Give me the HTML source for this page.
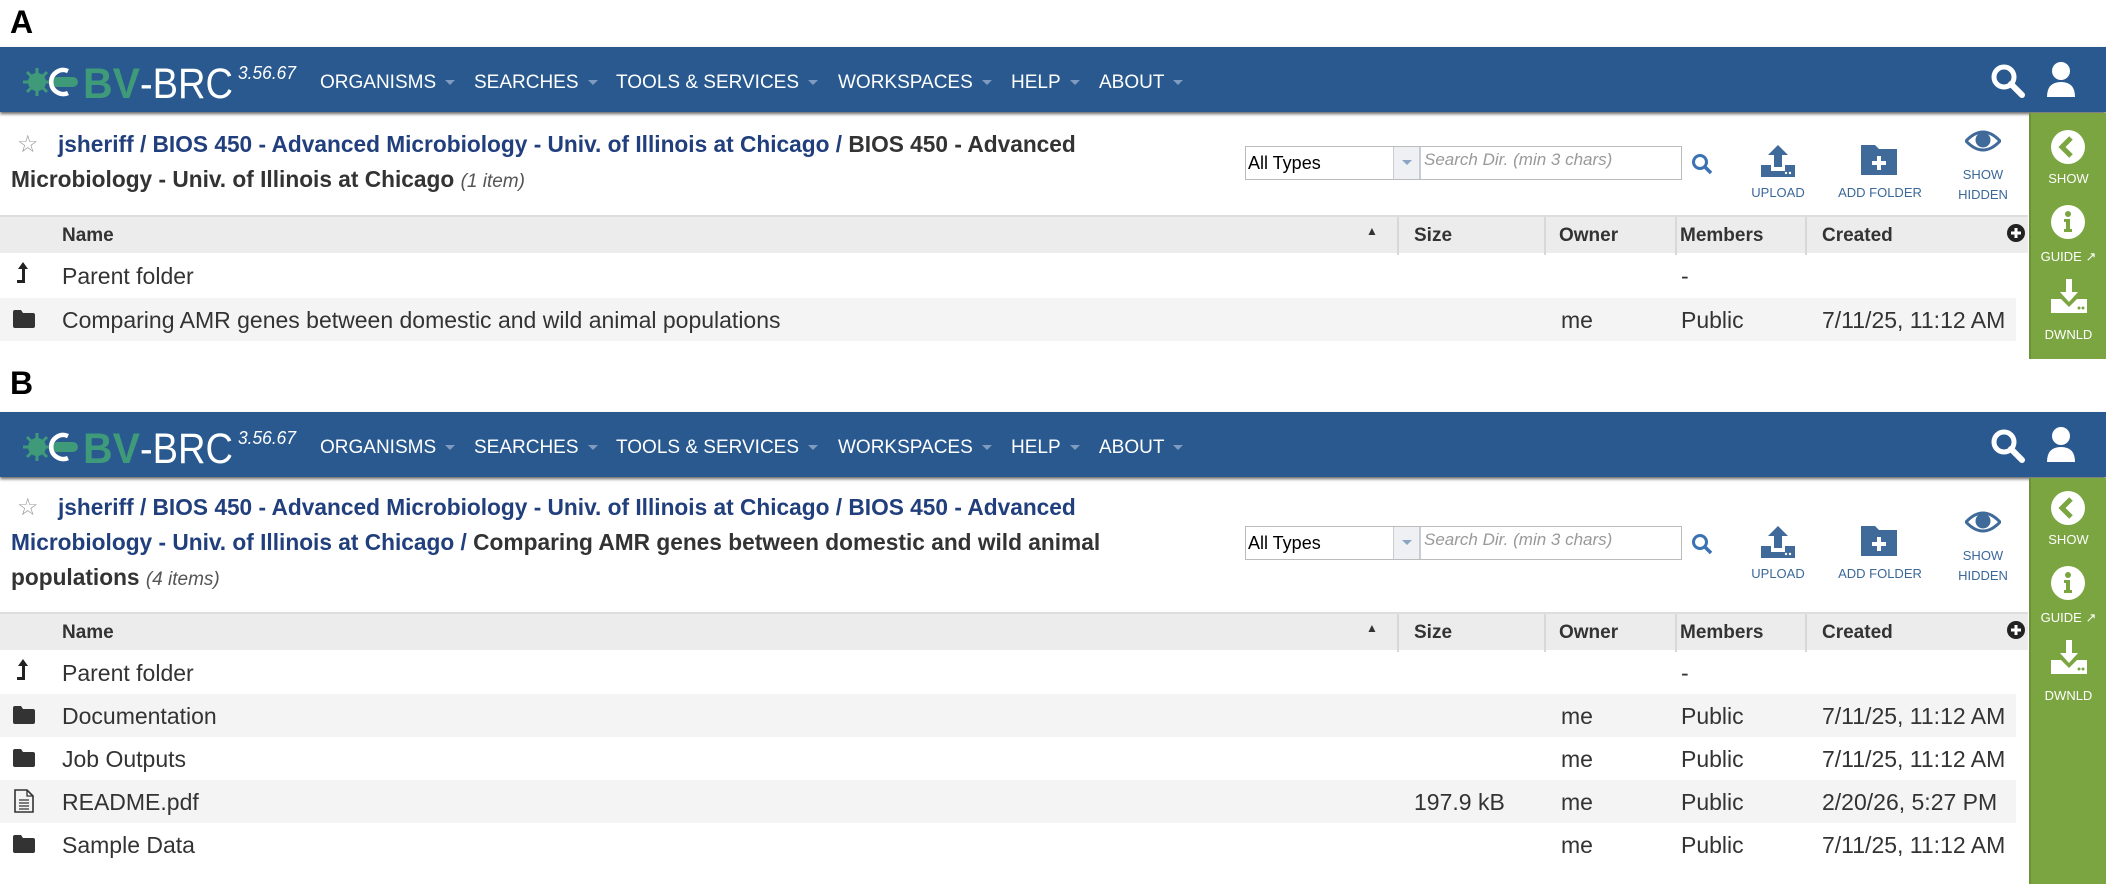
<!DOCTYPE html>
<html><head><meta charset="utf-8"><style>
*{box-sizing:border-box;margin:0;padding:0}
body{width:2106px;height:884px;background:#fff;font-family:"Liberation Sans",Arial,sans-serif;position:relative;overflow:hidden;color:#333}
.lbl{position:absolute;left:10px;font-weight:bold;font-size:32px;color:#000}
.panel{position:absolute;left:0;width:2106px}
.nav{position:absolute;left:0;top:0;width:2106px;height:65px;background:#29598f;box-shadow:0 2px 3px rgba(0,0,0,.6)}
.navi{position:absolute;top:3px;height:65px;line-height:65px;color:#fff;font-size:19px;white-space:nowrap}
.car{display:inline-block;width:0;height:0;border-left:5px solid transparent;border-right:5px solid transparent;border-top:5px solid #7f9cc0;margin-left:9px;vertical-align:middle}
.side{position:absolute;left:2029px;width:77px;background:#7ba540;border-left:2px solid #6a9236}
.side .t{position:absolute;left:0;width:75px;text-align:center;color:#fff;font-size:13px}
.bc{position:absolute;left:11px;font-size:22.7px;font-weight:bold;line-height:35px;color:#333;white-space:nowrap}
.bc a{color:#213f7d;text-decoration:none}
.bc i{font-weight:normal;font-size:19px;color:#555}
.hdr{position:absolute;left:0;width:2028px;height:38px;background:#ececec;border-top:2px solid #ddd;font-weight:bold;font-size:19px;color:#333}
.hdr span{position:absolute;top:8px}
.sep{position:absolute;top:0;width:2px;height:38px;background:#d8d8d8}
.row{position:absolute;left:0;width:2016px;height:43px;font-size:23px;color:#333;white-space:nowrap}
.row span{position:absolute;top:9px}
.g{background:#f4f4f4}
.tb{position:absolute;font-size:13px;color:#3b6899;text-align:center}
</style></head><body>

<div class="lbl" style="top:4px">A</div>
<div class="lbl" style="top:365px">B</div>

<div class="panel" style="top:47px;height:312px">
 <div class="nav">
  <svg style="position:absolute;left:22px;top:15px" width="300" height="40" viewBox="0 0 300 40">
   <g fill="#3e9a78"><circle cx="15" cy="20" r="9"/>
   <g stroke="#3e9a78" stroke-width="3"><line x1="15" y1="6" x2="15" y2="34"/><line x1="1" y1="20" x2="29" y2="20"/><line x1="5" y1="10" x2="25" y2="30"/><line x1="25" y1="10" x2="5" y2="30"/></g>
   <rect x="30" y="15" width="26" height="10" rx="5" fill="#3e9a78"/></g>
   <path d="M46 9 A12 12 0 1 0 46 31" fill="none" stroke="#fff" stroke-width="4.5"/>
   <text x="61" y="36" font-family="Liberation Sans" font-weight="bold" font-size="43" fill="#3e9a78" textLength="57" lengthAdjust="spacingAndGlyphs">BV</text>
   <text x="118" y="36" font-family="Liberation Sans" font-size="43" fill="#fff" textLength="93" lengthAdjust="spacingAndGlyphs">-BRC</text>
   <text x="216" y="17" font-family="Liberation Sans" font-style="italic" font-size="18" fill="#fff" textLength="58" lengthAdjust="spacingAndGlyphs">3.56.67</text>
  </svg>
  <div class="navi" style="left:320px">ORGANISMS<span class="car"></span></div>
  <div class="navi" style="left:474px">SEARCHES<span class="car"></span></div>
  <div class="navi" style="left:616px">TOOLS &amp; SERVICES<span class="car"></span></div>
  <div class="navi" style="left:838px">WORKSPACES<span class="car"></span></div>
  <div class="navi" style="left:1011px">HELP<span class="car"></span></div>
  <div class="navi" style="left:1099px">ABOUT<span class="car"></span></div>
  <svg style="position:absolute;left:1990px;top:16px" width="36" height="36" viewBox="0 0 36 36"><circle cx="14" cy="14" r="10" fill="none" stroke="#fff" stroke-width="5"/><line x1="21" y1="21" x2="32" y2="32" stroke="#fff" stroke-width="6" stroke-linecap="round"/></svg>
  <svg style="position:absolute;left:2046px;top:14px" width="30" height="38" viewBox="0 0 30 38"><circle cx="15" cy="10" r="9" fill="#fff"/><path d="M1 36 Q1 21 15 21 Q29 21 29 36 Z" fill="#fff"/></svg>
 </div>
 <div class="side" style="top:66px;height:246px">
  <svg style="position:absolute;left:19px;top:16px" width="36" height="36"><circle cx="18" cy="18" r="17" fill="#fff"/><path d="M21 9 L12 18 L21 27" fill="none" stroke="#7ba540" stroke-width="5"/></svg>
  <div class="t" style="top:58px">SHOW</div>
  <svg style="position:absolute;left:19px;top:91px" width="36" height="36"><circle cx="18" cy="18" r="17" fill="#fff"/><circle cx="18" cy="10" r="3" fill="#7ba540"/><path d="M14 15h6v10h2v3h-8v-3h2v-7h-2z" fill="#7ba540"/></svg>
  <div class="t" style="top:136px">GUIDE &#x2197;</div>
  <svg style="position:absolute;left:18px;top:166px" width="40" height="36"><path d="M17 0h6v13h6l-9 10-9-10h6z" fill="#fff"/><path d="M2 20h10l8 8 8-8h10v14H2z" fill="#fff"/><circle cx="30" cy="29" r="1.5" fill="#7ba540"/><circle cx="34" cy="29" r="1.5" fill="#7ba540"/></svg>
  <div class="t" style="top:214px">DWNLD</div>
 </div>
 <div class="bc" style="top:80px"><span style="position:absolute;left:6px;top:0;font-weight:normal;color:#999;font-size:24px">☆</span><span style="padding-left:47px"><a>jsheriff / BIOS 450 - Advanced Microbiology - Univ. of Illinois at Chicago / </a>BIOS 450 - Advanced</span><br>Microbiology - Univ. of Illinois at Chicago <i>(1 item)</i></div>
 <div style="position:absolute;left:1245px;top:99px;width:437px;height:34px;border:1px solid #bbb;background:#fff">
  <div style="position:absolute;left:2px;top:6px;font-size:18px;color:#000">All Types</div>
  <div style="position:absolute;left:147px;top:0;width:26px;height:32px;background:#eef0f3;border-left:1px solid #ccc"><span class="car" style="margin:13px 0 0 8px;border-top-color:#8aa4c4;position:absolute"></span></div>
  <div style="position:absolute;left:173px;top:0;height:32px;border-left:2px solid #c8ccd6"></div>
  <div style="position:absolute;left:178px;top:3px;font-size:17px;font-style:italic;color:#999">Search Dir. (min 3 chars)</div>
 </div>
 <svg style="position:absolute;left:1691px;top:106px" width="22" height="22"><circle cx="9" cy="9" r="6.5" fill="none" stroke="#3b72b3" stroke-width="3"/><line x1="14" y1="14" x2="20" y2="20" stroke="#3b72b3" stroke-width="3.5"/></svg>
 <svg style="position:absolute;left:1761px;top:98px" width="34" height="34"><path d="M17 0l10 10h-6v12h-8V10H7z" fill="#3f6a99"/><path d="M0 20h10v6h14v-6h10v12H0z" fill="#3f6a99"/><circle cx="25" cy="28" r="1.2" fill="#fff"/><circle cx="29" cy="28" r="1.2" fill="#fff"/></svg>
 <div class="tb" style="left:1740px;width:76px;top:138px">UPLOAD</div>
 <svg style="position:absolute;left:1861px;top:98px" width="36" height="30"><path d="M0 0h14l4 4h18v26H0z" fill="#3f6a99"/><path d="M16 11h4v5h5v4h-5v5h-4v-5h-5v-4h5z" fill="#fff"/></svg>
 <div class="tb" style="left:1830px;width:100px;top:138px">ADD FOLDER</div>
 <svg style="position:absolute;left:1965px;top:82px" width="36" height="24"><path d="M1 12Q18 -6 35 12Q18 30 1 12Z" fill="none" stroke="#3f6a99" stroke-width="3"/><circle cx="18" cy="11" r="7.5" fill="#3f6a99"/></svg>
 <div class="tb" style="left:1945px;width:76px;top:118px;line-height:20px">SHOW<br>HIDDEN</div>
 <div class="hdr" style="top:168px"><span style="left:62px">Name</span><span style="left:1366px;top:7px;font-size:12px">▲</span><div class="sep" style="left:1397px"></div><span style="left:1414px">Size</span><div class="sep" style="left:1544px"></div><span style="left:1559px">Owner</span><div class="sep" style="left:1675px"></div><span style="left:1680px">Members</span><div class="sep" style="left:1805px"></div><span style="left:1822px">Created</span><svg style="position:absolute;left:2007px;top:7px" width="18" height="18"><circle cx="9" cy="9" r="9" fill="#222"/><path d="M7.5 4h3v3.5H14v3h-3.5V14h-3v-3.5H4v-3h3.5z" fill="#fff"/></svg></div>
 <div class="row" style="top:207px"><svg style="position:absolute;left:15px;top:8px" width="16" height="22"><path d="M8 0l5 7H10v14H2v-3h5V7H3z" fill="#222"/></svg><span style="left:62px">Parent folder</span><span style="left:1681px">-</span></div>
 <div class="row g" style="top:251px"><svg style="position:absolute;left:13px;top:12px" width="22" height="18"><path d="M0 2Q0 0 2 0h6l2 3h10q2 0 2 2v11q0 2-2 2H2q-2 0-2-2z" fill="#333"/></svg><span style="left:62px">Comparing AMR genes between domestic and wild animal populations</span><span style="left:1561px">me</span><span style="left:1681px">Public</span><span style="left:1822px">7/11/25, 11:12 AM</span></div>
</div>

<div class="panel" style="top:412px;height:472px">
 <div class="nav">
  <svg style="position:absolute;left:22px;top:15px" width="300" height="40" viewBox="0 0 300 40">
   <g fill="#3e9a78"><circle cx="15" cy="20" r="9"/>
   <g stroke="#3e9a78" stroke-width="3"><line x1="15" y1="6" x2="15" y2="34"/><line x1="1" y1="20" x2="29" y2="20"/><line x1="5" y1="10" x2="25" y2="30"/><line x1="25" y1="10" x2="5" y2="30"/></g>
   <rect x="30" y="15" width="26" height="10" rx="5" fill="#3e9a78"/></g>
   <path d="M46 9 A12 12 0 1 0 46 31" fill="none" stroke="#fff" stroke-width="4.5"/>
   <text x="61" y="36" font-family="Liberation Sans" font-weight="bold" font-size="43" fill="#3e9a78" textLength="57" lengthAdjust="spacingAndGlyphs">BV</text>
   <text x="118" y="36" font-family="Liberation Sans" font-size="43" fill="#fff" textLength="93" lengthAdjust="spacingAndGlyphs">-BRC</text>
   <text x="216" y="17" font-family="Liberation Sans" font-style="italic" font-size="18" fill="#fff" textLength="58" lengthAdjust="spacingAndGlyphs">3.56.67</text>
  </svg>
  <div class="navi" style="left:320px">ORGANISMS<span class="car"></span></div>
  <div class="navi" style="left:474px">SEARCHES<span class="car"></span></div>
  <div class="navi" style="left:616px">TOOLS &amp; SERVICES<span class="car"></span></div>
  <div class="navi" style="left:838px">WORKSPACES<span class="car"></span></div>
  <div class="navi" style="left:1011px">HELP<span class="car"></span></div>
  <div class="navi" style="left:1099px">ABOUT<span class="car"></span></div>
  <svg style="position:absolute;left:1990px;top:16px" width="36" height="36" viewBox="0 0 36 36"><circle cx="14" cy="14" r="10" fill="none" stroke="#fff" stroke-width="5"/><line x1="21" y1="21" x2="32" y2="32" stroke="#fff" stroke-width="6" stroke-linecap="round"/></svg>
  <svg style="position:absolute;left:2046px;top:14px" width="30" height="38" viewBox="0 0 30 38"><circle cx="15" cy="10" r="9" fill="#fff"/><path d="M1 36 Q1 21 15 21 Q29 21 29 36 Z" fill="#fff"/></svg>
 </div>
 <div class="side" style="top:66px;height:406px">
  <svg style="position:absolute;left:19px;top:12px" width="36" height="36"><circle cx="18" cy="18" r="17" fill="#fff"/><path d="M21 9 L12 18 L21 27" fill="none" stroke="#7ba540" stroke-width="5"/></svg>
  <div class="t" style="top:54px">SHOW</div>
  <svg style="position:absolute;left:19px;top:87px" width="36" height="36"><circle cx="18" cy="18" r="17" fill="#fff"/><circle cx="18" cy="10" r="3" fill="#7ba540"/><path d="M14 15h6v10h2v3h-8v-3h2v-7h-2z" fill="#7ba540"/></svg>
  <div class="t" style="top:132px">GUIDE &#x2197;</div>
  <svg style="position:absolute;left:18px;top:162px" width="40" height="36"><path d="M17 0h6v13h6l-9 10-9-10h6z" fill="#fff"/><path d="M2 20h10l8 8 8-8h10v14H2z" fill="#fff"/><circle cx="30" cy="29" r="1.5" fill="#7ba540"/><circle cx="34" cy="29" r="1.5" fill="#7ba540"/></svg>
  <div class="t" style="top:210px">DWNLD</div>
 </div>
 <div class="bc" style="top:78px"><span style="position:absolute;left:6px;top:0;font-weight:normal;color:#999;font-size:24px">☆</span><span style="padding-left:47px"><a>jsheriff / BIOS 450 - Advanced Microbiology - Univ. of Illinois at Chicago / BIOS 450 - Advanced</a></span><br><a>Microbiology - Univ. of Illinois at Chicago / </a>Comparing AMR genes between domestic and wild animal<br>populations <i>(4 items)</i></div>
 <div style="position:absolute;left:1245px;top:114px;width:437px;height:34px;border:1px solid #bbb;background:#fff">
  <div style="position:absolute;left:2px;top:6px;font-size:18px;color:#000">All Types</div>
  <div style="position:absolute;left:147px;top:0;width:26px;height:32px;background:#eef0f3;border-left:1px solid #ccc"><span class="car" style="margin:13px 0 0 8px;border-top-color:#8aa4c4;position:absolute"></span></div>
  <div style="position:absolute;left:173px;top:0;height:32px;border-left:2px solid #c8ccd6"></div>
  <div style="position:absolute;left:178px;top:3px;font-size:17px;font-style:italic;color:#999">Search Dir. (min 3 chars)</div>
 </div>
 <svg style="position:absolute;left:1691px;top:121px" width="22" height="22"><circle cx="9" cy="9" r="6.5" fill="none" stroke="#3b72b3" stroke-width="3"/><line x1="14" y1="14" x2="20" y2="20" stroke="#3b72b3" stroke-width="3.5"/></svg>
 <svg style="position:absolute;left:1761px;top:114px" width="34" height="34"><path d="M17 0l10 10h-6v12h-8V10H7z" fill="#3f6a99"/><path d="M0 20h10v6h14v-6h10v12H0z" fill="#3f6a99"/><circle cx="25" cy="28" r="1.2" fill="#fff"/><circle cx="29" cy="28" r="1.2" fill="#fff"/></svg>
 <div class="tb" style="left:1740px;width:76px;top:154px">UPLOAD</div>
 <svg style="position:absolute;left:1861px;top:114px" width="36" height="30"><path d="M0 0h14l4 4h18v26H0z" fill="#3f6a99"/><path d="M16 11h4v5h5v4h-5v5h-4v-5h-5v-4h5z" fill="#fff"/></svg>
 <div class="tb" style="left:1830px;width:100px;top:154px">ADD FOLDER</div>
 <svg style="position:absolute;left:1965px;top:98px" width="36" height="24"><path d="M1 12Q18 -6 35 12Q18 30 1 12Z" fill="none" stroke="#3f6a99" stroke-width="3"/><circle cx="18" cy="11" r="7.5" fill="#3f6a99"/></svg>
 <div class="tb" style="left:1945px;width:76px;top:134px;line-height:20px">SHOW<br>HIDDEN</div>
 <div class="hdr" style="top:200px"><span style="left:62px">Name</span><span style="left:1366px;top:7px;font-size:12px">▲</span><div class="sep" style="left:1397px"></div><span style="left:1414px">Size</span><div class="sep" style="left:1544px"></div><span style="left:1559px">Owner</span><div class="sep" style="left:1675px"></div><span style="left:1680px">Members</span><div class="sep" style="left:1805px"></div><span style="left:1822px">Created</span><svg style="position:absolute;left:2007px;top:7px" width="18" height="18"><circle cx="9" cy="9" r="9" fill="#222"/><path d="M7.5 4h3v3.5H14v3h-3.5V14h-3v-3.5H4v-3h3.5z" fill="#fff"/></svg></div>
 <div class="row" style="top:239px"><svg style="position:absolute;left:15px;top:8px" width="16" height="22"><path d="M8 0l5 7H10v14H2v-3h5V7H3z" fill="#222"/></svg><span style="left:62px">Parent folder</span><span style="left:1681px">-</span></div>
 <div class="row g" style="top:282px"><svg style="position:absolute;left:13px;top:12px" width="22" height="18"><path d="M0 2Q0 0 2 0h6l2 3h10q2 0 2 2v11q0 2-2 2H2q-2 0-2-2z" fill="#333"/></svg><span style="left:62px">Documentation</span><span style="left:1561px">me</span><span style="left:1681px">Public</span><span style="left:1822px">7/11/25, 11:12 AM</span></div>
 <div class="row" style="top:325px"><svg style="position:absolute;left:13px;top:12px" width="22" height="18"><path d="M0 2Q0 0 2 0h6l2 3h10q2 0 2 2v11q0 2-2 2H2q-2 0-2-2z" fill="#333"/></svg><span style="left:62px">Job Outputs</span><span style="left:1561px">me</span><span style="left:1681px">Public</span><span style="left:1822px">7/11/25, 11:12 AM</span></div>
 <div class="row g" style="top:368px"><svg style="position:absolute;left:14px;top:9px" width="20" height="24"><path d="M1 1h12l6 6v16H1z" fill="none" stroke="#333" stroke-width="1.6"/><path d="M13 1v6h6M5 11h10M5 14h10M5 17h10M5 20h10" stroke="#333" stroke-width="1.3" fill="none"/></svg><span style="left:62px">README.pdf</span><span style="left:1414px">197.9 kB</span><span style="left:1561px">me</span><span style="left:1681px">Public</span><span style="left:1822px">2/20/26, 5:27 PM</span></div>
 <div class="row" style="top:411px"><svg style="position:absolute;left:13px;top:12px" width="22" height="18"><path d="M0 2Q0 0 2 0h6l2 3h10q2 0 2 2v11q0 2-2 2H2q-2 0-2-2z" fill="#333"/></svg><span style="left:62px">Sample Data</span><span style="left:1561px">me</span><span style="left:1681px">Public</span><span style="left:1822px">7/11/25, 11:12 AM</span></div>
</div>
</body></html>
